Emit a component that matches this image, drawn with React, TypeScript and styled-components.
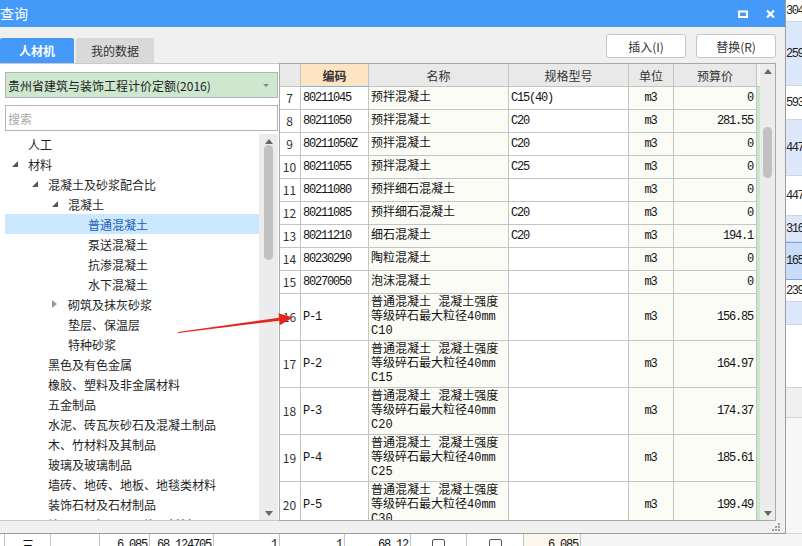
import * as React from 'react'
import styled, { createGlobalStyle } from 'styled-components'

const ui = `"Noto Sans CJK SC", "Noto Sans", sans-serif`
const mono = `"Liberation Mono", "Noto Sans CJK SC", monospace`

const GlobalStyle = createGlobalStyle`
  html, body {
    margin: 0;
    padding: 0;
    background: #fff;
  }
  body {
    font-family: ${ui};
    font-size: 12px;
    color: #222;
  }
  * {
    box-sizing: border-box;
  }
`

const Page = styled.div`
  position: relative;
  width: 802px;
  height: 546px;
  overflow: hidden;
  display: flex;
  flex-direction: column;
`

const Upper = styled.div`
  display: flex;
  height: 534px;
  flex: none;
`

const Dialog = styled.div`
  width: 786px;
  height: 534px;
  flex: none;
  display: flex;
  flex-direction: column;
  background: #f0f0f0;
  border-right: 1px solid #9c9c9c;
  border-bottom: 1px solid #9c9c9c;
`

const TitleBar = styled.div`
  height: 27px;
  flex: none;
  display: flex;
  align-items: center;
  padding-right: 10px;
  background: #4499f9;
  color: #fff;
  font-size: 14px;
`

const Title = styled.div`
  flex: 1;
  line-height: 27px;
`

const TitleButtons = styled.div`
  display: flex;
  align-items: center;
  gap: 18px;
`

const TopRow = styled.div`
  height: 36px;
  flex: none;
  display: flex;
  justify-content: space-between;
  padding-right: 9px;
`

const Tabs = styled.div`
  display: flex;
  align-items: flex-end;
  gap: 2px;
`

const Tab = styled.div<{ $active?: boolean; $w: number }>`
  width: ${p => p.$w}px;
  height: 25px;
  display: flex;
  align-items: center;
  justify-content: center;
  border-radius: 2px 2px 0 0;
  background: ${p => (p.$active ? '#4499f9' : '#d9d9d9')};
  color: ${p => (p.$active ? '#fff' : '#333')};
  font-weight: ${p => (p.$active ? 'bold' : 'normal')};
  font-size: 12px;
`

const Buttons = styled.div`
  display: flex;
  gap: 10px;
  margin-top: 7px;
  align-self: flex-start;
`

const Button = styled.button`
  width: 80px;
  height: 24px;
  background: #fff;
  border: 1px solid #c6c6c6;
  border-radius: 3px;
  font-family: ${ui};
  font-size: 12px;
  color: #333;
  padding: 0;
`

const Main = styled.div`
  height: 458px;
  flex: none;
  display: flex;
  padding-right: 9px;
`

const LeftPanel = styled.div`
  width: 279px;
  flex: none;
  display: flex;
  flex-direction: column;
  background: #fff;
  border-top: 1px solid #cacaca;
  border-bottom: 1px solid #cacaca;
  padding: 8px 1px 0 5px;
`

const Dropdown = styled.div`
  height: 26px;
  flex: none;
  display: flex;
  align-items: center;
  justify-content: space-between;
  padding: 0 8px 0 2px;
  background: #cde8cf;
  border: 1px solid #b4b4b4;
  color: #222;
`

const Caret = styled.span`
  width: 0;
  height: 0;
  border-left: 3px solid transparent;
  border-right: 3px solid transparent;
  border-top: 3px solid #888;
`

const Search = styled.input`
  height: 26px;
  flex: none;
  margin-top: 7px;
  border: 1px solid #b4b4b4;
  padding: 0 2px;
  font-family: ${ui};
  font-size: 12px;
  outline: none;
  &::placeholder {
    color: #a8a8a8;
  }
`

const Tree = styled.div`
  margin-top: 3px;
  flex: 1;
  min-height: 0;
  display: flex;
  overflow: hidden;
`

const TreeList = styled.div`
  flex: 1;
  overflow: hidden;
`

const TreeRow = styled.div<{ $level: number; $selected?: boolean }>`
  height: 20px;
  display: flex;
  align-items: center;
  padding-left: ${p => 7 + p.$level * 20}px;
  background: ${p => (p.$selected ? '#cce8ff' : 'transparent')};
  color: ${p => (p.$selected ? '#1c5fb8' : '#1f1f1f')};
  white-space: nowrap;
`

const Toggle = styled.span`
  width: 16px;
  flex: none;
  display: flex;
  align-items: center;
`

const VScroll = styled.div<{ $w: number }>`
  width: ${p => p.$w}px;
  flex: none;
  display: flex;
  flex-direction: column;
  align-items: center;
  background: #ececec;
`

const ArrowBox = styled.div`
  height: 14px;
  flex: none;
  display: flex;
  align-items: center;
  justify-content: center;
`

const Thumb = styled.div<{ $top: number; $h: number }>`
  width: 9px;
  height: ${p => p.$h}px;
  margin-top: ${p => p.$top}px;
  border-radius: 5px;
  background: #c1c1c1;
`

const Fill = styled.div`
  flex: 1;
`

const TablePanel = styled.div`
  width: 497px;
  flex: none;
  display: flex;
  border: 1px solid #a9a9a9;
  background: #fff;
  overflow: hidden;
`

const TableArea = styled.div`
  width: 480px;
  flex: none;
  display: flex;
  flex-direction: column;
`

const cols = '21px 68px 140px 120px 45px 83px 3px'

const HeadRow = styled.div`
  height: 23px;
  flex: none;
  display: grid;
  grid-template-columns: ${cols};
`

const HeadCell = styled.div<{ $key?: boolean; $blank?: boolean }>`
  display: flex;
  align-items: center;
  justify-content: center;
  background: ${p => (p.$key ? '#fde5c4' : p.$blank ? '#f4f4f4' : '#e9e9e9')};
  border-right: ${p => (p.$blank ? 'none' : '1px solid #c4c4c4')};
  border-bottom: 1px solid ${p => (p.$key ? '#7fb0ea' : '#c4c4c4')};
  font-weight: ${p => (p.$key ? 'bold' : 'normal')};
  color: #333;
`

const Body = styled.div`
  flex: 1;
  min-height: 0;
  overflow: hidden;
`

const Row = styled.div<{ $tall?: boolean }>`
  height: ${p => (p.$tall ? 47 : 23)}px;
  display: grid;
  grid-template-columns: ${cols};
  font-family: ${mono};
  font-size: 12px;
  color: #111;
`

const Cell = styled.div<{
  $align?: 'left' | 'center' | 'right'
  $cream?: boolean
  $top?: boolean
  $tight?: boolean
}>`
  display: flex;
  align-items: ${p => (p.$top ? 'flex-start' : 'center')};
  justify-content: ${p =>
    p.$align === 'right' ? 'flex-end' : p.$align === 'center' ? 'center' : 'flex-start'};
  padding: ${p => (p.$top ? '2px 2px 0' : '0 3px 0 2px')};
  border-right: 1px solid #c4c4c4;
  border-bottom: 1px solid #c4c4c4;
  background: ${p => (p.$cream ? '#fcfcf6' : '#fff')};
  letter-spacing: ${p => (p.$tight ? '-1.2px' : '0')};
  line-height: 14px;
  white-space: pre;
  overflow: hidden;
`

const NumCell = styled(Cell)`
  font-family: ${ui};
  font-size: 12px;
  color: #333;
`

const GreenCell = styled.div`
  background: #c9e7c9;
`

const Footer = styled.div`
  height: 12px;
  flex: none;
  display: flex;
  justify-content: flex-end;
  align-items: center;
  padding-right: 5px;
`

const Strip = styled.div`
  width: 16px;
  flex: none;
  display: flex;
  flex-direction: column;
  overflow: hidden;
`

const StripCell = styled.div<{ $h: number; $bg: string; $sel?: boolean }>`
  height: ${p => p.$h}px;
  flex: none;
  display: flex;
  align-items: center;
  background: ${p => p.$bg};
  border-bottom: 1px solid ${p => (p.$sel ? '#7aa6e6' : '#ccd6e6')};
  border-top: ${p => (p.$sel ? '1px solid #7aa6e6' : 'none')};
  font-family: ${mono};
  font-size: 12px;
  letter-spacing: -1.5px;
  color: #222;
  white-space: nowrap;
`

const BgRow = styled.div`
  height: 12px;
  flex: none;
  display: flex;
  overflow: hidden;
  background: #f5f5f5;
`

const BgCell = styled.div<{ $w: number; $align?: 'center' | 'right'; $cream?: boolean }>`
  width: ${p => p.$w}px;
  height: 22px;
  flex: none;
  display: flex;
  justify-content: ${p => (p.$align === 'right' ? 'flex-end' : 'center')};
  align-items: center;
  padding: 0 2px;
  background: ${p => (p.$cream ? '#fdf8ee' : '#fff')};
  border-right: 1px solid #c4c4c4;
  font-family: ${mono};
  font-size: 12px;
  letter-spacing: -1.2px;
  color: #111;
  white-space: nowrap;
`

const CheckBox = styled.span`
  width: 13px;
  height: 13px;
  border: 1px solid #555;
  border-radius: 2px;
  background: #fff;
`

const Overlay = styled.svg`
  position: absolute;
  left: 0;
  top: 0;
  pointer-events: none;
`

const Expanded = () => (
  <svg width="6" height="6" viewBox="0 0 6 6">
    <polygon points="6,0 6,6 0,6" fill="#555" />
  </svg>
)

const Collapsed = () => (
  <svg width="5" height="8" viewBox="0 0 5 8">
    <polygon points="0,0 5,4 0,8" fill="#9a9a9a" />
  </svg>
)

const Up = () => (
  <svg width="8" height="5" viewBox="0 0 8 5">
    <polygon points="0,5 4,0 8,5" fill="#666" />
  </svg>
)

const Down = () => (
  <svg width="8" height="5" viewBox="0 0 8 5">
    <polygon points="0,0 8,0 4,5" fill="#666" />
  </svg>
)

type Node = { label: string; level: number; open?: boolean; closed?: boolean; selected?: boolean }

const tree: Node[] = [
  { label: '人工', level: 0 },
  { label: '材料', level: 0, open: true },
  { label: '混凝土及砂浆配合比', level: 1, open: true },
  { label: '混凝土', level: 2, open: true },
  { label: '普通混凝土', level: 3, selected: true },
  { label: '泵送混凝土', level: 3 },
  { label: '抗渗混凝土', level: 3 },
  { label: '水下混凝土', level: 3 },
  { label: '砌筑及抹灰砂浆', level: 2, closed: true },
  { label: '垫层、保温层', level: 2 },
  { label: '特种砂浆', level: 2 },
  { label: '黑色及有色金属', level: 1 },
  { label: '橡胶、塑料及非金属材料', level: 1 },
  { label: '五金制品', level: 1 },
  { label: '水泥、砖瓦灰砂石及混凝土制品', level: 1 },
  { label: '木、竹材料及其制品', level: 1 },
  { label: '玻璃及玻璃制品', level: 1 },
  { label: '墙砖、地砖、地板、地毯类材料', level: 1 },
  { label: '装饰石材及石材制品', level: 1 },
  { label: '墙面、天棚及屋面饰面材料', level: 1 },
]

type Item = { n: number; code: string; name: string; spec: string; price: string; tall?: boolean }

const mix = '普通混凝土 混凝土强度\n等级碎石最大粒径40mm\n'

const items: Item[] = [
  { n: 7, code: '80211045', name: '预拌混凝土', spec: 'C15(40)', price: '0' },
  { n: 8, code: '80211050', name: '预拌混凝土', spec: 'C20', price: '281.55' },
  { n: 9, code: '80211050Z', name: '预拌混凝土', spec: 'C20', price: '0' },
  { n: 10, code: '80211055', name: '预拌混凝土', spec: 'C25', price: '0' },
  { n: 11, code: '80211080', name: '预拌细石混凝土', spec: '', price: '0' },
  { n: 12, code: '80211085', name: '预拌细石混凝土', spec: 'C20', price: '0' },
  { n: 13, code: '80211210', name: '细石混凝土', spec: 'C20', price: '194.1' },
  { n: 14, code: '80230290', name: '陶粒混凝土', spec: '', price: '0' },
  { n: 15, code: '80270050', name: '泡沫混凝土', spec: '', price: '0' },
  { n: 16, code: 'P-1', name: mix + 'C10', spec: '', price: '156.85', tall: true },
  { n: 17, code: 'P-2', name: mix + 'C15', spec: '', price: '164.97', tall: true },
  { n: 18, code: 'P-3', name: mix + 'C20', spec: '', price: '174.37', tall: true },
  { n: 19, code: 'P-4', name: mix + 'C25', spec: '', price: '185.61', tall: true },
  { n: 20, code: 'P-5', name: mix + 'C30', spec: '', price: '199.49', tall: true },
]

const strip = [
  { h: 22, bg: '#fff', t: '304' },
  { h: 64, bg: '#dde8fb', t: '259' },
  { h: 34, bg: '#fff', t: '593' },
  { h: 56, bg: '#dde8fb', t: '447' },
  { h: 40, bg: '#fff', t: '447' },
  { h: 26, bg: '#dde8fb', t: '316' },
  { h: 38, bg: '#c9dcf8', t: '165', sel: true },
  { h: 22, bg: '#fff', t: '239' },
  { h: 23, bg: '#dde8fb', t: '' },
  { h: 63, bg: '#fff', t: '' },
  { h: 30, bg: '#f0f0f0', t: '' },
  { h: 116, bg: '#f7f7f7', t: '' },
]

export default function App() {
  return (
    <Page>
      <GlobalStyle />
      <Upper>
        <Dialog>
          <TitleBar>
            <Title>查询</Title>
            <TitleButtons>
              <svg width="10" height="8" viewBox="0 0 10 8">
                <rect x="1" y="1.5" width="8" height="5.5" fill="none" stroke="#fff" strokeWidth="2" />
              </svg>
              <svg width="9" height="8" viewBox="0 0 9 8">
                <path d="M1 0.5 L8 7.5 M8 0.5 L1 7.5" stroke="#fff" strokeWidth="2.2" />
              </svg>
            </TitleButtons>
          </TitleBar>

          <TopRow>
            <Tabs>
              <Tab $active $w={74}>人材机</Tab>
              <Tab $w={78}>我的数据</Tab>
            </Tabs>
            <Buttons>
              <Button>插入(I)</Button>
              <Button>替换(R)</Button>
            </Buttons>
          </TopRow>

          <Main>
            <LeftPanel>
              <Dropdown>
                <span>贵州省建筑与装饰工程计价定额(2016)</span>
                <Caret />
              </Dropdown>
              <Search placeholder="搜索" />
              <Tree>
                <TreeList>
                  {tree.map((node, i) => (
                    <TreeRow key={i} $level={node.level} $selected={node.selected}>
                      <Toggle>
                        {node.open && <Expanded />}
                        {node.closed && <Collapsed />}
                      </Toggle>
                      {node.label}
                    </TreeRow>
                  ))}
                </TreeList>
                <VScroll $w={19}>
                  <ArrowBox><Up /></ArrowBox>
                  <Thumb $top={-3} $h={115} />
                  <Fill />
                  <ArrowBox><Down /></ArrowBox>
                </VScroll>
              </Tree>
            </LeftPanel>

            <TablePanel>
              <TableArea>
                <HeadRow>
                  <HeadCell />
                  <HeadCell $key>编码</HeadCell>
                  <HeadCell>名称</HeadCell>
                  <HeadCell>规格型号</HeadCell>
                  <HeadCell>单位</HeadCell>
                  <HeadCell>预算价</HeadCell>
                  <HeadCell $blank />
                </HeadRow>
                <Body>
                  {items.map(it => (
                    <Row key={it.n} $tall={it.tall}>
                      <NumCell $align="center">{it.n}</NumCell>
                      <Cell $tight>{it.code}</Cell>
                      <Cell $cream $top={it.tall}>{it.name}</Cell>
                      <Cell $tight>{it.spec}</Cell>
                      <Cell $align="center" $cream $tight>m3</Cell>
                      <Cell $align="right" $cream $tight>{it.price}</Cell>
                      <GreenCell />
                    </Row>
                  ))}
                </Body>
              </TableArea>
              <VScroll $w={15}>
                <ArrowBox><Up /></ArrowBox>
                <Thumb $top={49} $h={51} />
                <Fill />
                <ArrowBox><Down /></ArrowBox>
              </VScroll>
            </TablePanel>
          </Main>

          <Footer>
            <svg width="8" height="8" viewBox="0 0 8 8">
              <g fill="#9a9a9a">
                <rect x="6" y="0" width="2" height="2" />
                <rect x="3" y="3" width="2" height="2" />
                <rect x="6" y="3" width="2" height="2" />
                <rect x="0" y="6" width="2" height="2" />
                <rect x="3" y="6" width="2" height="2" />
                <rect x="6" y="6" width="2" height="2" />
              </g>
            </svg>
          </Footer>
        </Dialog>

        <Strip>
          {strip.map((s, i) => (
            <StripCell key={i} $h={s.h} $bg={s.bg} $sel={s.sel}>{s.t}</StripCell>
          ))}
        </Strip>
      </Upper>

      <BgRow>
        <BgCell $w={3} />
        <BgCell $w={46}>三</BgCell>
        <BgCell $w={49} />
        <BgCell $w={50} $align="right">6.085</BgCell>
        <BgCell $w={64} $align="right">68.124705</BgCell>
        <BgCell $w={66} $align="right">1</BgCell>
        <BgCell $w={65} $align="right">1</BgCell>
        <BgCell $w={66} $align="right">68.12</BgCell>
        <BgCell $w={56}><CheckBox /></BgCell>
        <BgCell $w={57}><CheckBox /></BgCell>
        <BgCell $w={57} $align="right" $cream>6.085</BgCell>
      </BgRow>

      <Overlay width="802" height="546" viewBox="0 0 802 546">
        <polygon
          points="178.1,333 177.9,332 278.9,317.8 279.3,320.8"
          fill="#e5261c"
        />
        <polygon points="293,317.5 278.4,313.3 279.8,325.3" fill="#e5261c" />
      </Overlay>
    </Page>
  )
}
